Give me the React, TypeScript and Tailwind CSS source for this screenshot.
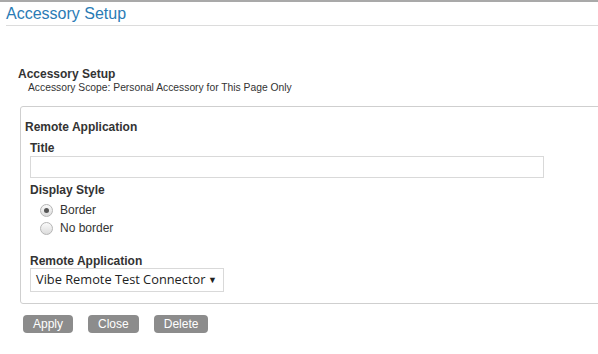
import React from 'react'

const arial = { fontFamily: '"Liberation Sans", Arial, sans-serif' }

const Radio = ({ checked, label }: { checked?: boolean; label: string }) => (
    <label className="flex items-center h-[18px] text-[12px] text-[#333]">
        <span className="ml-[10px] mr-[7px] flex h-[13px] w-[13px] items-center justify-center rounded-full border border-[#b5b5b5] bg-gradient-to-b from-[#fafafa] to-[#dcdcdc]">
            {checked && <span className="h-[5px] w-[5px] rounded-full bg-[#555]" />}
        </span>
        {label}
    </label>
)

export default function App() {
    return (
        <div className="h-[354px] w-[598px] overflow-hidden bg-white border-t-2 border-[#a9a9a9]" style={arial}>
            <div className="ml-[6px] border-b border-[#dcdcdc] pt-[3px] pb-[2px]">
                <h1 className="text-[16px] leading-[18px] text-[#2a7bb5]">Accessory Setup</h1>
            </div>

            <div className="pl-[18px] pt-[41px]">
                <div className="text-[12px] font-bold leading-[14px] text-[#333]">Accessory Setup</div>
                <div className="ml-[10px] mt-[1px] text-[10.3px] leading-[12px] text-[#333]">
                    Accessory Scope: Personal Accessory for This Page Only
                </div>
            </div>

            <div className="ml-[20px] mt-[12px] -mr-[10px] h-[198px] rounded-tl-[3px] rounded-bl-[3px] border border-[#cfcfcf] pl-[4px] pt-[13px]">
                <div className="text-[12px] font-bold leading-[14px] text-[#333]">Remote Application</div>
                <div className="ml-[5px] mt-[7px]">
                    <div className="text-[12px] font-bold leading-[14px] text-[#333]">Title</div>
                    <input className="mt-[1px] block h-[22px] w-[514px] border border-[#d9d9d9] outline-none" />
                    <div className="mt-[5px] text-[12px] font-bold leading-[14px] text-[#333]">Display Style</div>
                    <div className="mt-[4px]">
                        <Radio checked label="Border" />
                        <Radio label="No border" />
                    </div>
                    <div className="mt-[17px] text-[12px] font-bold leading-[14px] text-[#333]">Remote Application</div>
                    <div
                        className="flex h-[24px] w-[194px] items-center justify-between border border-[#d9d9d9] pl-[5px] pr-[6px] text-[12.8px] text-[#222]"
                        style={{ fontFamily: '"Open Sans", "Noto Sans", sans-serif' }}
                    >
                        <span>Vibe Remote Test Connector</span>
                        <span className="text-[9px]">▼</span>
                    </div>
                </div>
            </div>

            <div className="ml-[23px] mt-[11px] flex gap-[15px]">
                {['Apply', 'Close', 'Delete'].map((b) => (
                    <button
                        key={b}
                        className="h-[18px] rounded-[4px] bg-[#8c8c8c] px-[10px] text-[12px] leading-[18px] text-white"
                    >
                        {b}
                    </button>
                ))}
            </div>
        </div>
    )
}
